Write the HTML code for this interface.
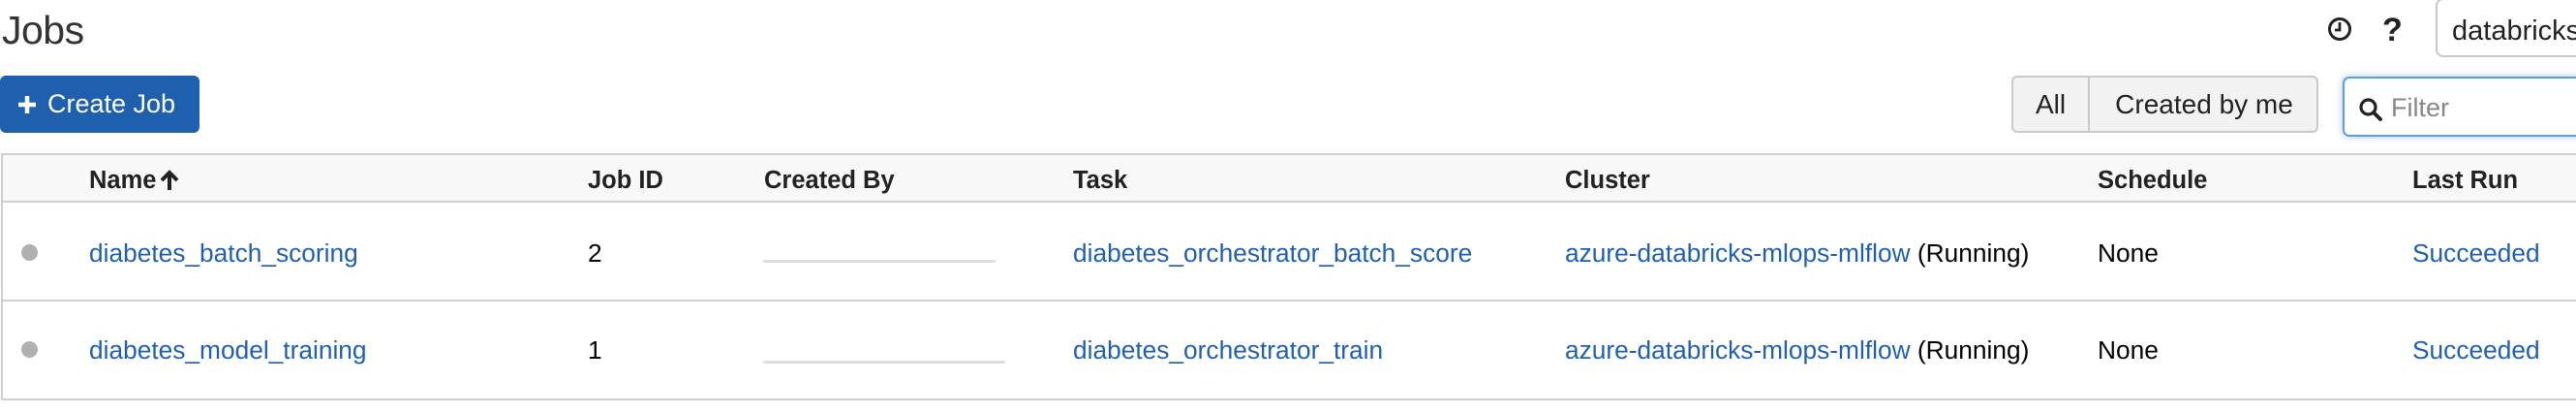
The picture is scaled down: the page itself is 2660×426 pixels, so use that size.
<!DOCTYPE html>
<html><head><meta charset="utf-8"><style>
*{margin:0;padding:0;box-sizing:border-box}
body{width:2660px;height:426px;background:#fff;font-family:"Liberation Sans",Arial,sans-serif;position:relative;overflow:hidden;color:#000}
.a{position:absolute;white-space:nowrap}
.lnk{color:#1f5fb3}
.h{font-weight:bold;font-size:25.5px;color:#222}
.c{font-size:26.3px}
</style></head><body>
<div class="a" style="left:2px;top:8px;font-size:41px;font-weight:300;color:#333;letter-spacing:-0.5px">Jobs</div>

<div class="a" style="left:0;top:78px;width:206px;height:59px;background:#1e5fae;border-radius:6px;color:#fff;font-size:27px;line-height:59px;padding-left:18px">
<svg width="20" height="20" viewBox="0 0 20 20" style="vertical-align:-2px;margin-right:11px"><path d="M10 1v18M1 10h18" stroke="#fff" stroke-width="4.5"/></svg>Create Job</div>

<svg class="a" style="left:2403px;top:17px" width="26" height="26" viewBox="0 0 26 26"><circle cx="13" cy="13" r="10.5" fill="none" stroke="#222" stroke-width="3"/><path d="M13 6v8h-5" fill="none" stroke="#222" stroke-width="2.8"/></svg>
<div class="a" style="left:2460px;top:12px;font-size:34px;font-weight:bold;color:#222">?</div>
<div class="a" style="left:2515px;top:-2px;width:200px;height:61px;border:2px solid #c8c8c8;border-radius:8px;font-size:29px;color:#222;padding:16px 0 0 15px">databricks</div>

<div class="a" style="left:2077px;top:78px;width:317px;height:59px;border:2px solid #c9c9c9;border-radius:6px;background:#f2f2f2;font-size:28px;color:#222">
<div class="a" style="left:0;top:0;width:79px;height:55px;border-right:2px solid #c9c9c9;text-align:center;line-height:55px">All</div>
<div class="a" style="left:81px;top:0;width:232px;height:55px;text-align:center;line-height:55px">Created by me</div></div>

<div class="a" style="left:2419px;top:79px;width:300px;height:62px;border:2px solid #5b9ee6;border-radius:7px;box-shadow:0 0 8px rgba(80,150,230,.5);background:#fff">
<svg class="a" style="left:14px;top:19px" width="26" height="26" viewBox="0 0 26 26"><circle cx="10.5" cy="10.5" r="7.5" fill="none" stroke="#222" stroke-width="3.2"/><path d="M16 16l7 7" stroke="#222" stroke-width="3.8" stroke-linecap="round"/></svg>
<div class="a" style="left:48px;top:15px;font-size:27px;color:#888">Filter</div></div>

<div class="a" style="left:1px;top:158px;width:2700px;height:255px;border:2px solid #cfcfcf;border-right:none"></div>
<div class="a" style="left:3px;top:160px;width:2700px;height:49px;background:#f8f8f8;border-bottom:2px solid #cfcfcf"></div>
<div class="a" style="left:3px;top:309px;width:2700px;height:2px;background:#cfcfcf"></div>

<div class="a h" style="left:92px;top:172px">Name <svg width="20" height="22" viewBox="0 0 20 22" style="vertical-align:-3px;margin-left:-4px"><path d="M10 21V4M2 11l8-8 8 8" fill="none" stroke="#222" stroke-width="4"/></svg></div>
<div class="a h" style="left:607px;top:172px">Job ID</div>
<div class="a h" style="left:789px;top:172px">Created By</div>
<div class="a h" style="left:1108px;top:172px">Task</div>
<div class="a h" style="left:1616px;top:172px">Cluster</div>
<div class="a h" style="left:2166px;top:172px">Schedule</div>
<div class="a h" style="left:2491px;top:172px">Last Run</div>

<div class="a" style="left:22px;top:252px;width:17px;height:17px;border-radius:50%;background:#b0b0b0"></div>
<div class="a c lnk" style="left:92px;top:246px">diabetes_batch_scoring</div>
<div class="a c" style="left:607px;top:246px">2</div>
<div class="a" style="left:788px;top:268px;width:240px;height:3px;background:#ddd;border-radius:2px"></div>
<div class="a c lnk" style="left:1108px;top:246px">diabetes_orchestrator_batch_score</div>
<div class="a c" style="left:1616px;top:246px"><span class="lnk">azure-databricks-mlops-mlflow</span> (Running)</div>
<div class="a c" style="left:2166px;top:246px">None</div>
<div class="a c lnk" style="left:2491px;top:246px">Succeeded</div>

<div class="a" style="left:22px;top:352px;width:17px;height:17px;border-radius:50%;background:#b0b0b0"></div>
<div class="a c lnk" style="left:92px;top:346px">diabetes_model_training</div>
<div class="a c" style="left:607px;top:346px">1</div>
<div class="a" style="left:788px;top:372px;width:250px;height:3px;background:#ddd;border-radius:2px"></div>
<div class="a c lnk" style="left:1108px;top:346px">diabetes_orchestrator_train</div>
<div class="a c" style="left:1616px;top:346px"><span class="lnk">azure-databricks-mlops-mlflow</span> (Running)</div>
<div class="a c" style="left:2166px;top:346px">None</div>
<div class="a c lnk" style="left:2491px;top:346px">Succeeded</div>
</body></html>
